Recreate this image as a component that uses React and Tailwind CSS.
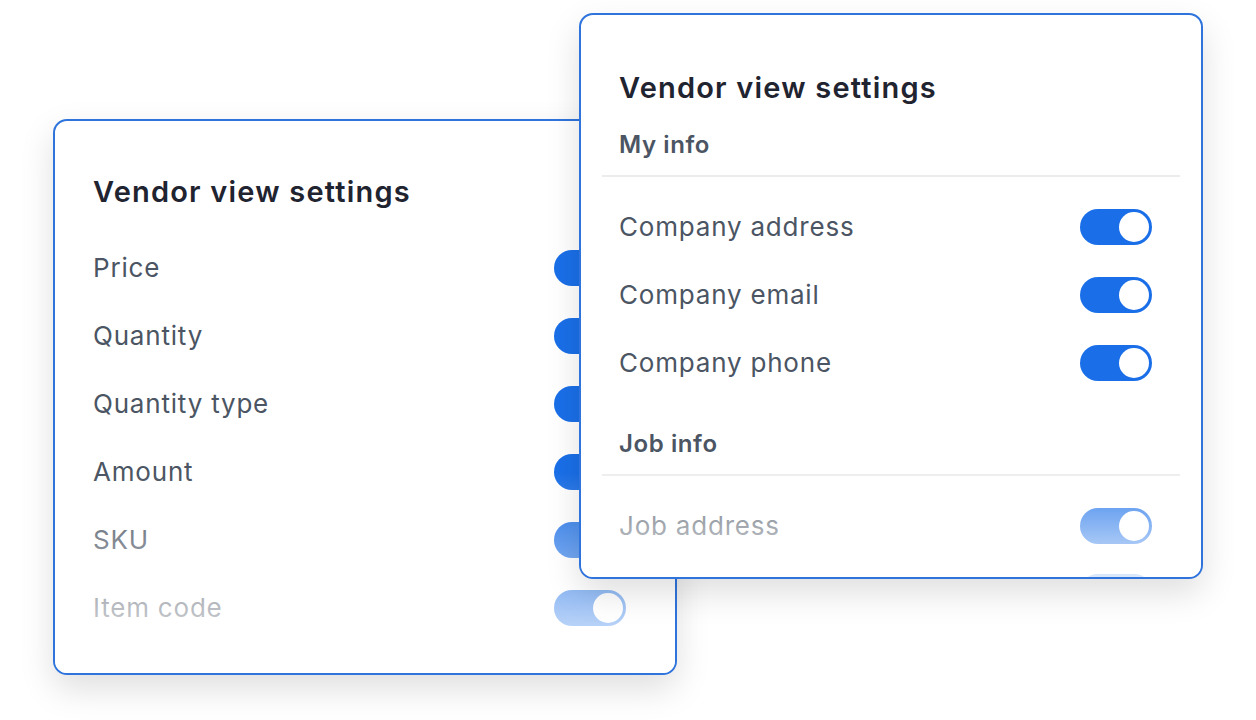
import React from "react";

const font = { fontFamily: "Inter, 'Noto Sans', sans-serif" };

function Toggle() {
  return (
    <div className="w-[72px] h-[36px] rounded-full bg-[#1a6fe8] flex items-center justify-end pr-[3px] shrink-0">
      <div className="w-[30px] h-[30px] rounded-full bg-white" />
    </div>
  );
}

function Row({ label }) {
  return (
    <div className="h-[68px] flex items-center justify-between">
      <span className="text-[26px] tracking-[0.8px] text-[#4b5563] leading-none">{label}</span>
      <Toggle />
    </div>
  );
}

function Section({ title }) {
  return (
    <div>
      <div className="h-[30px] flex items-center text-[24px] tracking-[0.6px] font-semibold text-[#4b5563]">{title}</div>
      <div className="-ml-[17px] -mr-[28px] mt-[15px] h-[2px] bg-[#ececee]" />
    </div>
  );
}

export default function App() {
  const leftRows = ["Price", "Quantity", "Quantity type", "Amount", "SKU", "Item code"];
  return (
    <div className="relative w-[1256px] h-[720px] bg-white overflow-hidden" style={font}>
      {/* back card */}
      <div className="absolute left-[53px] top-[119px] w-[624px] h-[556px] border-2 border-[#2f74dc] rounded-[14px] bg-white overflow-hidden shadow-[0_14px_34px_rgba(0,0,0,0.13)] pl-[38px] pr-[49px] pt-[53px]">
        <h2 className="h-[36px] flex items-center text-[29px] tracking-[1.2px] font-semibold text-[#1f2430]">Vendor view settings</h2>
        <div className="mt-[24px]">
          {leftRows.map((r) => (
            <Row key={r} label={r} />
          ))}
        </div>
        <div className="absolute inset-x-0 bottom-0 h-[200px] bg-linear-to-b from-white/0 to-white/90 pointer-events-none" />
      </div>

      {/* front card */}
      <div className="absolute left-[579px] top-[13px] w-[624px] h-[566px] border-2 border-[#2f74dc] rounded-[14px] bg-white overflow-hidden shadow-[0_14px_34px_rgba(0,0,0,0.13)] pl-[38px] pr-[49px] pt-[55px]">
        <h2 className="h-[36px] flex items-center text-[29px] tracking-[1.2px] font-semibold text-[#1f2430]">Vendor view settings</h2>
        <div className="mt-[24px]">
          <Section title="My info" />
          <div className="mt-[16px]">
            <Row label="Company address" />
            <Row label="Company email" />
            <Row label="Company phone" />
          </div>
        </div>
        <div className="mt-[32px]">
          <Section title="Job info" />
          <div className="mt-[16px]">
            <Row label="Job address" />
            <div className="h-[68px] flex items-start justify-end">
              <div className="mt-[14px]">
                <Toggle />
              </div>
            </div>
          </div>
        </div>
        <div className="absolute inset-x-0 bottom-0 h-[120px] bg-linear-to-b from-white/0 to-white/85 pointer-events-none" />
      </div>
    </div>
  );
}
